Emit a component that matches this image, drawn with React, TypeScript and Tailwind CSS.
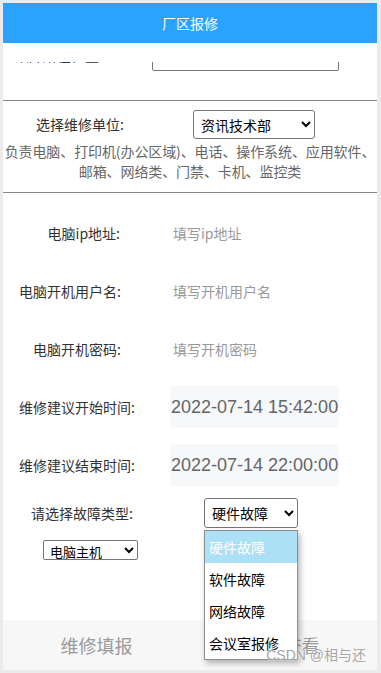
import React from 'react';

const CJK = { fontFamily: '"Noto Sans CJK SC", "Liberation Sans", sans-serif' };

const rows = [
    { label: '电脑ip地址:', placeholder: '填写ip地址', pr: 'pr-[18px]' },
    { label: '电脑开机用户名:', placeholder: '填写开机用户名', pr: 'pr-[17px]' },
    { label: '电脑开机密码:', placeholder: '填写开机密码', pr: 'pr-[17px]' },
];

const times = [
    { label: '维修建议开始时间:', value: '2022-07-14 15:42:00' },
    { label: '维修建议结束时间:', value: '2022-07-14 22:00:00' },
];

const options = ['硬件故障', '软件故障', '网络故障', '会议室报修'];

const App = () => {
    return (
        <div className="w-[381px] h-[673px] bg-[#ebebeb] pt-[3px] pl-[3px] pr-[4px] pb-[3px]" style={CJK}>
            <div className="relative w-full h-full bg-white flex flex-col overflow-hidden">
                {/* header */}
                <div className="h-[40px] shrink-0 bg-[#29a3fe] text-white text-[14px] flex items-center justify-center">
                    厂区报修
                </div>
                <div className="h-[19px] shrink-0 bg-white" />

                {/* scrolled content */}
                <div className="flex-1 overflow-hidden">
                    <div className="h-[9px] overflow-hidden">
                        <div className="-mt-[21px] h-[30px] flex items-center">
                            <span className="ml-[12px] w-[137px] text-[14px] text-[#323233] leading-[20px] -translate-y-[1px]">故障所在位置</span>
                            <div className="w-[187px] h-[30px] border border-[#767676] rounded-[2px]" />
                        </div>
                    </div>

                    <div className="mt-[29px] border-t border-[#888]" />

                    {/* repair unit */}
                    <div className="pt-[9px] pb-[11px]">
                        <div className="flex items-center h-[29px]">
                            <span className="ml-[33px] w-[157px] text-[14px] text-[#323233]">选择维修单位:</span>
                            <select
                                defaultValue="资讯技术部"
                                className="w-[122px] h-[29px] border border-[#767676] rounded-[3px] text-[14px] text-black pl-[3px] bg-white"
                                style={CJK}
                            >
                                <option>资讯技术部</option>
                            </select>
                        </div>
                        <p className="mt-[2px] text-center text-[14px] leading-[20px] text-[#666] tracking-[-0.1px]">
                            负责电脑、打印机(办公区域)、电话、操作系统、应用软件、
                            <br />
                            邮箱、网络类、门禁、卡机、监控类
                        </p>
                    </div>

                    <div className="border-t border-[#888]" />

                    <div className="pt-[11px]">
                        {rows.map((r) => (
                            <div key={r.label} className="h-[58px] flex items-center text-[14px]">
                                <span className={`w-[135px] text-right text-[#323233] ${r.pr}`}>{r.label}</span>
                                <span className="ml-[35px] text-[#999]">{r.placeholder}</span>
                            </div>
                        ))}
                        {times.map((t) => (
                            <div key={t.label} className="h-[58px] flex items-center">
                                <span className="w-[135px] text-right pr-[3px] text-[14px] text-[#323233]">{t.label}</span>
                                <div
                                    className="ml-[32px] w-[169px] h-[42px] shrink-0 bg-[#f7f8fa] rounded-[4px] flex items-center pl-[1px] text-[18px] text-[#646566] whitespace-nowrap"
                                    style={{ fontFamily: '"Liberation Sans", Arial, sans-serif' }}
                                >
                                    {t.value}
                                </div>
                            </div>
                        ))}

                        {/* fault type */}
                        <div className="h-[38px] flex items-center">
                            <span className="w-[135px] text-right pr-[5px] text-[14px] text-[#323233]">请选择故障类型:</span>
                            <select
                                defaultValue="硬件故障"
                                className="ml-[66px] w-[94px] h-[30px] border border-[#767676] rounded-[3px] text-[14px] text-black pl-[3px] bg-white"
                                style={CJK}
                            >
                                {options.map((o) => (
                                    <option key={o}>{o}</option>
                                ))}
                            </select>
                        </div>
                        <div className="mt-[6px] pl-[40px]">
                            <select
                                defaultValue="电脑主机"
                                className="w-[95px] h-[20px] py-0 border border-[#767676] rounded-[2px] text-[13px] leading-none text-black pl-[2px] bg-white"
                                style={CJK}
                            >
                                <option>电脑主机</option>
                            </select>
                        </div>
                    </div>
                </div>

                {/* tab bar */}
                <div className="h-[50px] shrink-0 bg-[#f7f7f7] flex text-[18px] text-[#9a9a9a]">
                    <div className="flex-1 flex items-center justify-center">维修填报</div>
                    <div className="flex-1 flex items-center justify-center">报修查看</div>
                </div>

                {/* open dropdown list */}
                <div className="absolute left-[201px] top-[527px] w-[94px] bg-white border border-[#8f8f8f] shadow-[2px_3px_6px_rgba(0,0,0,0.3)] text-[14px]">
                    {options.map((o, i) => (
                        <div
                            key={o}
                            className={`h-[32px] flex items-center pl-[4px] ${i === 0 ? 'bg-[#abe0f6] text-white' : 'text-black'}`}
                        >
                            {o}
                        </div>
                    ))}
                </div>

                {/* watermark */}
                <div className="absolute right-[11px] bottom-[4px] text-[14px] text-[#a6a6a6] [text-shadow:0_0_2px_#fff]">
                    <span style={{ fontFamily: '"Liberation Sans", sans-serif' }}>CSDN @</span>相与还
                </div>
            </div>
        </div>
    );
};

export default App;
